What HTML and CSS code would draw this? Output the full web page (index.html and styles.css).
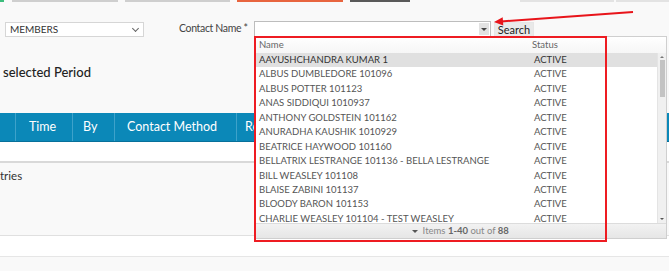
FILE: index.html
```html
<!DOCTYPE html>
<html lang="en">
<head>
    <meta charset="UTF-8">
    <title>Contacts</title>
    <link rel="stylesheet" href="styles.css">
</head>
<body>
    <div class="tabs">
        <span class="tab tab-green"></span>
        <span class="tab tab-grey t1"></span>
        <span class="tab tab-grey t2"></span>
        <span class="tab tab-orange"></span>
        <span class="tab tab-dark"></span>
        <span class="tab tab-light t3"></span>
        <span class="tab tab-light t4"></span>
    </div>

    <div class="filters">
        <div class="select">MEMBERS <span class="chev"></span></div>
        <label class="field-label">Contact Name *</label>
        <div class="combo">
            <span class="combo-input"></span>
            <span class="combo-btn"><i class="caret"></i></span>
        </div>
        <button class="btn-search">Search</button>
    </div>

    <h2 class="period">selected Period</h2>

    <div class="grid">
        <div class="grid-head">
            <div class="th c0"></div>
            <div class="th c1">Time</div>
            <div class="th c2">By</div>
            <div class="th c3">Contact Method</div>
            <div class="th c4">Re</div>
        </div>
        <div class="grid-row"></div>
    </div>

    <div class="entries">tries</div>

    <div class="band"></div>

    <!-- combobox popup -->
    <div class="popup">
        <div class="popup-head">
            <span>Name</span>
            <span>Status</span>
        </div>
        <div class="popup-body">
            <div class="rows">
                <div class="row selected"><span>AAYUSHCHANDRA KUMAR 1</span><span>ACTIVE</span></div>
                <div class="row"><span>ALBUS DUMBLEDORE 101096</span><span>ACTIVE</span></div>
                <div class="row"><span>ALBUS POTTER 101123</span><span>ACTIVE</span></div>
                <div class="row"><span>ANAS SIDDIQUI 1010937</span><span>ACTIVE</span></div>
                <div class="row"><span>ANTHONY GOLDSTEIN 101162</span><span>ACTIVE</span></div>
                <div class="row"><span>ANURADHA KAUSHIK 1010929</span><span>ACTIVE</span></div>
                <div class="row"><span>BEATRICE HAYWOOD 101160</span><span>ACTIVE</span></div>
                <div class="row"><span>BELLATRIX LESTRANGE 101136 - BELLA LESTRANGE</span><span>ACTIVE</span></div>
                <div class="row"><span>BILL WEASLEY 101108</span><span>ACTIVE</span></div>
                <div class="row"><span>BLAISE ZABINI 101137</span><span>ACTIVE</span></div>
                <div class="row"><span>BLOODY BARON 101153</span><span>ACTIVE</span></div>
                <div class="row"><span>CHARLIE WEASLEY 101104 - TEST WEASLEY</span><span>ACTIVE</span></div>
            </div>
            <div class="scrollbar">
                <span class="sb-up"></span>
                <span class="sb-thumb"></span>
                <span class="sb-down"></span>
            </div>
        </div>
        <div class="popup-foot">
            <i class="caret"></i> Items <b>1-40</b> out of <b>88</b>
        </div>
    </div>

    <!-- annotation -->
    <div class="callout"></div>
    <svg class="arrow" width="150" height="22" viewBox="0 0 150 22">
        <line x1="143" y1="4" x2="11" y2="13.4" stroke="#e8141a" stroke-width="2"/>
        <polygon points="4,14 13.3,17.6 12.7,9.2" fill="#e8141a"/>
    </svg>
</body>
</html>
```

FILE: styles.css
```css
body {
    margin: 0;
    background: #f9f9f9;
    font-family: Lato, "Liberation Sans", sans-serif;
    color: #333;
}

.tabs {
    display: flex;
    height: 2px;
}

.tab {
    display: block;
    height: 2px;
    margin-left: 7px;
}

.tab-green { width: 4px; margin-left: 0; background: #3dbd7d; }
.tab-grey { background: #cfcfcf; }
.t1 { width: 106px; margin-left: 8px; }
.t2 { width: 105px; }
.tab-orange { width: 106px; background: #e8653f; }
.tab-dark { width: 60px; background: #5a5a5a; }
.tab-light { background: #e3e3e3; }
.t3 { width: 94px; margin-left: 110px; }
.t4 { width: 53px; margin-left: 2px; }

.filters {
    display: flex;
    align-items: center;
    margin-top: 19px;
    height: 16px;
}

.select {
    box-sizing: border-box;
    width: 139px;
    height: 15px;
    margin-left: 5px;
    padding-left: 4px;
    background: #fff;
    border: 1px solid #d6d6d6;
    font-size: 10px;
    line-height: 13px;
    color: #333;
    position: relative;
}

.chev {
    position: absolute;
    right: 5px;
    top: 3px;
    width: 4px;
    height: 4px;
    border-right: 1px solid #666;
    border-bottom: 1px solid #666;
    transform: rotate(45deg);
}

.field-label {
    flex: none;
    box-sizing: border-box;
    margin-left: 35px;
    width: 75px;
    white-space: nowrap;
    font-size: 10.5px;
    letter-spacing: -0.35px;
    color: #444;
    margin-top: -3px;
}

.combo {
    box-sizing: border-box;
    display: flex;
    width: 237px;
    height: 16px;
    background: #fff;
    border: 1px solid #bdbdbd;
}

.combo-input { flex: 1; }

.combo-btn {
    width: 10px;
    margin: 1px;
    background: #e2e2e2;
    display: flex;
    align-items: center;
    justify-content: center;
}

.caret {
    display: inline-block;
    width: 0;
    height: 0;
    border-left: 3px solid transparent;
    border-right: 3px solid transparent;
    border-top: 3px solid #444;
}

.btn-search {
    margin-left: 3px;
    width: 40px;
    height: 15px;
    padding: 0;
    border: 1px solid #e6e6e6;
    background: #e9e9e9;
    font-family: inherit;
    font-size: 11px;
    color: #222;
}

.period {
    margin: 27px 0 0 3px;
    font-size: 13px;
    line-height: 16px;
    font-weight: 500;
    color: #222;
}

.grid {
    margin-top: 33px;
}

.grid-head {
    display: flex;
    height: 28px;
    background: #0b88b8;
    border-bottom: 1px solid #07709a;
}

.th {
    box-sizing: border-box;
    height: 28px;
    line-height: 28px;
    font-size: 12.5px;
    color: #fff;
    border-right: 1px solid #3ea2ca;
    white-space: nowrap;
}

.c0 { width: 16px; }
.c1 { width: 57px; padding-left: 13px; }
.c2 { width: 42px; padding-left: 10px; }
.c3 { width: 122px; padding-left: 12px; }
.c4 { flex: 1; padding-left: 8px; border-right: 0; }

.grid-row {
    height: 19px;
    background: #fff;
    border-bottom: 2px solid #d9d9d9;
}

.entries {
    margin-top: 5px;
    font-size: 11.5px;
    line-height: 16px;
    color: #333;
}

.band {
    margin-top: 51px;
    height: 20px;
    background: #fff;
    border-top: 1px solid #e0e0e0;
    border-bottom: 1px solid #e6e6e6;
}

/* combobox popup */
.popup {
    position: absolute;
    left: 254px;
    top: 36px;
    width: 411px;
    background: #fff;
    border: 1px solid #cfcfcf;
    font-size: 9.5px;
    color: #555;
}

.popup-head {
    display: grid;
    grid-template-columns: 273px 1fr;
    height: 16px;
    line-height: 16px;
    padding-left: 4px;
    background: linear-gradient(#fff, #f6f6f6);
    color: #666;
}

.popup-body {
    display: flex;
    height: 170px;
    overflow: hidden;
}

.rows { flex: 1; }

.row {
    display: grid;
    grid-template-columns: 275px 1fr;
    height: 14.45px;
    line-height: 14.45px;
    padding-left: 4px;
    color: #555;
}

.row.selected {
    background: #e0e0e0;
    color: #333;
}

.scrollbar {
    width: 8px;
    background: #f0f0f0;
    border-left: 1px solid #e4e4e4;
    display: flex;
    flex-direction: column;
    align-items: center;
}

.sb-up, .sb-down {
    width: 0;
    height: 0;
    border-left: 2px solid transparent;
    border-right: 2px solid transparent;
    margin-top: 3px;
}

.sb-up { border-bottom: 2px solid #777; }
.sb-down { border-top: 2px solid #555; margin-top: auto; margin-bottom: 3px; }

.sb-thumb {
    width: 5px;
    height: 37px;
    margin-top: 2px;
    background: #c3c3c3;
}

.popup-foot {
    height: 14px;
    line-height: 14px;
    text-align: center;
    background: linear-gradient(#f2f2f2, #e6e6e6);
    border-top: 1px solid #dcdcdc;
    color: #888;
    font-size: 9.5px;
}

.popup-foot b { color: #666; }
.popup-foot .caret { border-top-color: #555; vertical-align: middle; margin-right: 2px; }

/* annotation */
.callout {
    position: absolute;
    left: 254px;
    top: 36px;
    width: 349px;
    height: 202px;
    border: 2px solid #ee1c22;
}

.arrow {
    position: absolute;
    left: 490px;
    top: 8px;
}
```
